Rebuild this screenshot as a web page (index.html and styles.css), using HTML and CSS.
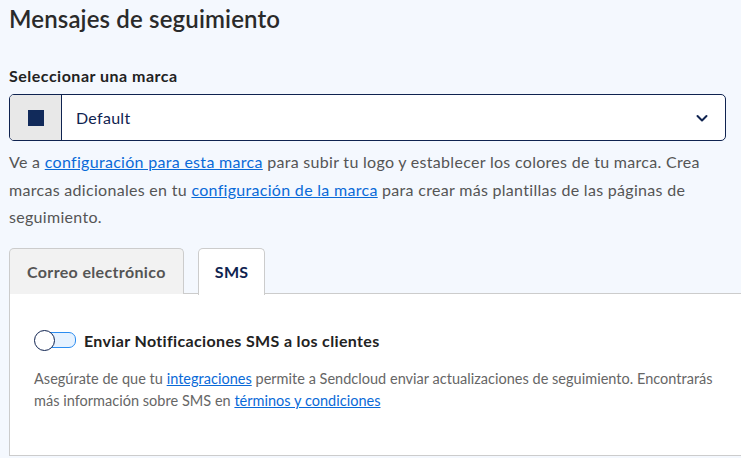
FILE: index.html
```html
<!DOCTYPE html>
<html lang="es">
<head>
  <meta charset="UTF-8">
  <meta name="viewport" content="width=device-width, initial-scale=1.0">
  <title>Mensajes de seguimiento</title>
  <link rel="stylesheet" href="styles.css">
</head>
<body>
  <div class="tracking-page">
    <h1 class="tracking-title">Mensajes de seguimiento</h1>

    <!-- Brand picker -->
    <label class="brand-label" for="brand-select">Seleccionar una marca</label>
    <div class="brand-select">
      <div class="brand-swatch"><span class="brand-swatch-color"></span></div>
      <div class="brand-value" id="brand-select">Default</div>
      <svg class="brand-chevron" width="14" height="14" viewBox="0 0 14 14" aria-hidden="true">
        <path d="M2.5 5 L7 9.5 L11.5 5" fill="none" stroke="#0f2350" stroke-width="2" stroke-linecap="round" stroke-linejoin="round"/>
      </svg>
    </div>

    <p class="brand-help">
      Ve a <a href="#">configuración para esta marca</a> para subir tu logo y establecer los colores de tu marca. Crea
      marcas adicionales en tu <a href="#">configuración de la marca</a> para crear más plantillas de las páginas de
      seguimiento.
    </p>

    <!-- Tabs -->
    <div class="tabs">
      <div class="tab">Correo electrónico</div>
      <div class="tab tab-active">SMS</div>
    </div>

    <div class="tab-panel">
      <div class="sms-toggle-row">
        <span class="toggle"><span class="toggle-knob"></span></span>
        <span class="sms-toggle-label">Enviar Notificaciones SMS a los clientes</span>
      </div>
      <p class="sms-help">
        Asegúrate de que tu <a href="#">integraciones</a> permite a Sendcloud enviar actualizaciones de seguimiento. Encontrarás
        más información sobre SMS en <a href="#">términos y condiciones</a>
      </p>
    </div>
  </div>
</body>
</html>
```

FILE: styles.css
```css
* {
  margin: 0;
  padding: 0;
  box-sizing: border-box;
}

body {
  background: #f4f8fe;
  font-family: Lato, "Liberation Sans", sans-serif;
  color: #333;
  overflow: hidden;
}

.tracking-page {
  padding: 4px 15px 0 9px;
}

.tracking-title {
  font-size: 24px;
  font-weight: 600;
  line-height: 30px;
  letter-spacing: 0.15px;
  color: #2a2a2a;
}

.brand-label {
  display: block;
  margin-top: 32px;
  font-size: 16px;
  font-weight: 700;
  line-height: 20px;
  letter-spacing: 0.5px;
  color: #222;
}

.brand-select {
  display: flex;
  align-items: center;
  height: 47px;
  margin-top: 8px;
  background: #fff;
  border: 1px solid #0f2350;
  border-radius: 5px;
  overflow: hidden;
}

.brand-swatch {
  display: flex;
  align-items: center;
  justify-content: center;
  width: 52px;
  height: 100%;
  background: #e8e8e8;
  border-right: 1px solid #0f2350;
}

.brand-swatch-color {
  width: 16px;
  height: 16px;
  background: #112a5a;
}

.brand-value {
  flex: 1;
  padding-left: 14px;
  font-size: 16px;
  letter-spacing: 0.3px;
  color: #0f2350;
}

.brand-chevron {
  margin-right: 16px;
}

.brand-help {
  margin-top: 7px;
  font-size: 16px;
  line-height: 27.5px;
  letter-spacing: 0.3px;
  color: #555;
}

a {
  color: #0a6ad8;
  text-decoration: underline;
}

.tabs {
  display: flex;
  gap: 14px;
  margin-top: 17px;
}

.tab {
  height: 46px;
  padding: 0 17px;
  display: flex;
  align-items: center;
  font-size: 16px;
  font-weight: 700;
  letter-spacing: 0.35px;
  color: #555;
  background: #f2f2f2;
  border: 1px solid #ccc;
  border-bottom: none;
  border-radius: 5px 5px 0 0;
}

.tab-active {
  position: relative;
  z-index: 1;
  padding: 0 16px;
  color: #0f2350;
  background: #fff;
  margin-bottom: -1px;
  height: 47px;
}

.tab-panel {
  width: 760px;
  height: 163px;
  margin-top: -1px;
  padding: 36px 0 0 24px;
  background: #fff;
  border: 1px solid #ccc;
}

.sms-toggle-row {
  display: flex;
  align-items: center;
  gap: 8px;
}

.toggle {
  position: relative;
  width: 42px;
  height: 21px;
  display: flex;
  align-items: center;
}

.toggle::before {
  content: "";
  width: 36px;
  height: 14px;
  margin-left: 5px;
  background: #e6f2ff;
  border: 1px solid #2b8cf0;
  border-radius: 7px;
}

.toggle-knob {
  position: absolute;
  left: 0;
  top: 0;
  width: 21px;
  height: 21px;
  background: #fff;
  border: 1px solid #0f2350;
  border-radius: 50%;
}

.sms-toggle-label {
  font-size: 16px;
  font-weight: 700;
  letter-spacing: 0.35px;
  color: #222;
}

.sms-help {
  max-width: 700px;
  margin-top: 17px;
  font-size: 14.5px;
  line-height: 22px;
  letter-spacing: 0.02px;
  color: #666;
}
```
